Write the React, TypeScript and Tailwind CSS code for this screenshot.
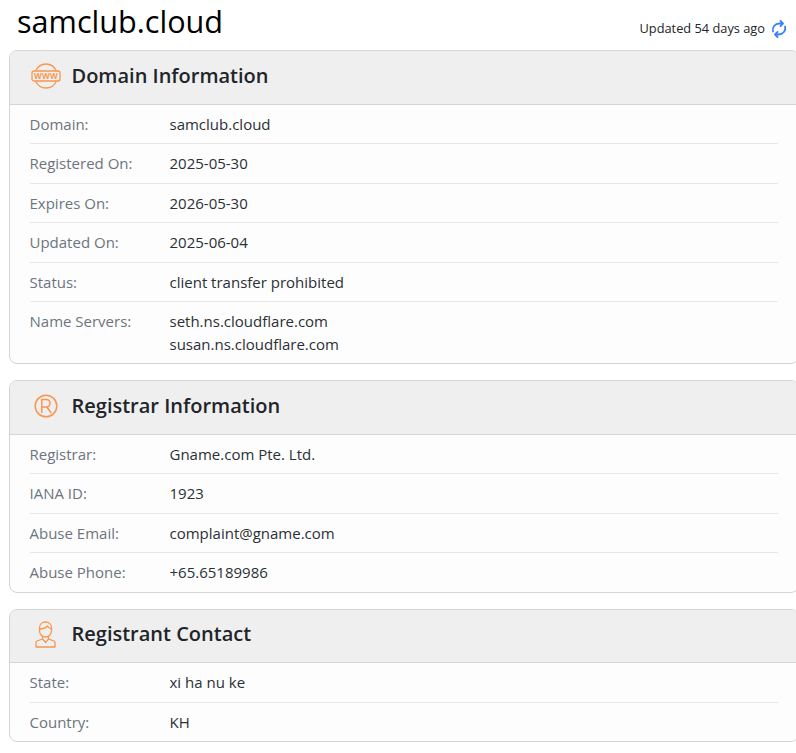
import React from 'react';

function WwwIcon() {
  return (
    <svg width="30" height="26" viewBox="0 0 30 26" fill="none" stroke="#f9964f" strokeWidth="1.3">
      <path d="M4.500 8C6.500 3.800 10.400 1 15 1s8.500 2.800 10.500 7" />
      <path d="M4.500 18c2 4.200 5.900 7 10.500 7s8.500-2.800 10.500-7" />
      <rect x="1" y="8" width="28" height="10" rx="2" />
      <text x="15" y="15.800" textAnchor="middle" fontSize="8" fontWeight="700" fill="#f9964f" stroke="none" fontFamily="'Open Sans', sans-serif" letterSpacing="0.2">WWW</text>
    </svg>
  );
}

function RegisteredIcon() {
  return (
    <svg width="24" height="24" viewBox="0 0 24 24" fill="none" stroke="#f9964f" strokeWidth="1.500">
      <circle cx="12" cy="12" r="10.800" />
      <path d="M7.800 19V5.500h4.500a3.700 3.700 0 0 1 0 7.500H7.800M12.800 13l4.500 6" />
    </svg>
  );
}

function PersonIcon() {
  return (
    <svg width="21" height="27" viewBox="0 0 21 27" fill="none" stroke="#f9964f" strokeWidth="1.300" strokeLinejoin="round">
      <path d="M4.500 7c0-3.500 2.500-6 6-6s6 2.500 6 6v3c0 3.200-2.800 6-6 6s-6-2.800-6-6V7z" />
      <path d="M4.500 8c3 0 6-.8 8-3 .8 1.500 2 2.600 4 3" />
      <path d="M7.500 15.500V18l-5.500 2c-.7.300-1 .9-1 1.500V26h19v-4.500c0-.6-.3-1.200-1-1.500l-5.500-2v-2.500" />
      <path d="M7.500 18l3 3.500 3-3.500" />
    </svg>
  );
}

function RefreshIcon() {
  return (
    <svg width="16" height="18" viewBox="0 0 16 18" fill="none" stroke="#3b82f6" strokeWidth="1.800" strokeLinecap="round" strokeLinejoin="round">
      <path d="M2 11.500C.8 7.500 3.800 3.600 8.500 3.500h2" />
      <path d="M9.500 1l2.500 2.500L9.500 6" />
      <path d="M14 6.500c1.200 4-1.800 7.900-6.500 8h-2" />
      <path d="M6.500 17L4 14.500 6.500 12" />
    </svg>
  );
}

type RowData = { label: string; value: string[] };

function Card({ icon, title, rows }: { icon: React.ReactNode; title: string; rows: RowData[] }) {
  return (
    <section className="border border-[#d5d5d5] rounded-lg overflow-hidden bg-[#fdfdfd]">
      <header className="flex items-center h-[53.5px] pb-[3px] bg-[#efefef] border-b border-[#d5d5d5]">
        <span className="w-[62px] flex justify-center pl-[10px] shrink-0">{icon}</span>
        <h2 className="text-[20px] leading-[30px] font-semibold text-[#212529]">{title}</h2>
      </header>
      <div className="px-5">
        {rows.map((row, i) => (
          <div key={row.label} className={`flex py-2 text-[15px] leading-[22.5px] ${i < rows.length - 1 ? 'border-b border-[#e6e6e6]' : ''}`}>
            <div className="w-[140px] shrink-0 text-[#6c757d]">{row.label}</div>
            <div className="text-[#2b3035]">
              {row.value.map(v => <div key={v}>{v}</div>)}
            </div>
          </div>
        ))}
      </div>
    </section>
  );
}

export default function App() {
  return (
    <div className="w-[796px] h-[753px] overflow-hidden bg-white font-['Open_Sans',sans-serif]">
      <div className="flex items-center justify-between h-[50px] pl-[17px] pr-[9px]">
        <h1 className="text-[30.6px] leading-[45px] text-black pb-[8px]">samclub.cloud</h1>
        <div className="flex items-center gap-[6px] text-[12.8px] text-[#212529] pt-[8px]">
          Updated 54 days ago
          <RefreshIcon />
        </div>
      </div>
      <div className="ml-[8.5px] flex flex-col gap-4 w-[790px]">
        <Card
          icon={<WwwIcon />}
          title="Domain Information"
          rows={[
            { label: 'Domain:', value: ['samclub.cloud'] },
            { label: 'Registered On:', value: ['2025-05-30'] },
            { label: 'Expires On:', value: ['2026-05-30'] },
            { label: 'Updated On:', value: ['2025-06-04'] },
            { label: 'Status:', value: ['client transfer prohibited'] },
            { label: 'Name Servers:', value: ['seth.ns.cloudflare.com', 'susan.ns.cloudflare.com'] },
          ]}
        />
        <Card
          icon={<RegisteredIcon />}
          title="Registrar Information"
          rows={[
            { label: 'Registrar:', value: ['Gname.com Pte. Ltd.'] },
            { label: 'IANA ID:', value: ['1923'] },
            { label: 'Abuse Email:', value: ['complaint@gname.com'] },
            { label: 'Abuse Phone:', value: ['+65.65189986'] },
          ]}
        />
        <Card
          icon={<PersonIcon />}
          title="Registrant Contact"
          rows={[
            { label: 'State:', value: ['xi ha nu ke'] },
            { label: 'Country:', value: ['KH'] },
          ]}
        />
      </div>
    </div>
  );
}
